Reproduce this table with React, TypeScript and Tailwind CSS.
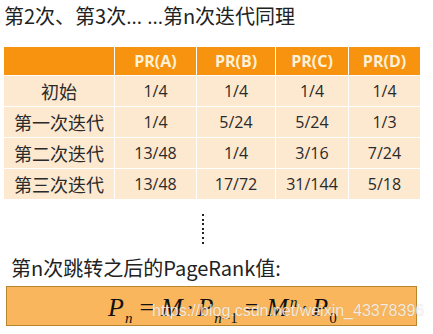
import React from 'react';

const cjk = "font-['Noto_Sans_CJK_SC',sans-serif]";
const num = "font-['Open_Sans','Noto_Sans_CJK_SC',sans-serif]";

const headers = ['PR(A)', 'PR(B)', 'PR(C)', 'PR(D)'];
const rows: string[][] = [
  ['初始', '1/4', '1/4', '1/4', '1/4'],
  ['第一次迭代', '1/4', '5/24', '5/24', '1/3'],
  ['第二次迭代', '13/48', '1/4', '3/16', '7/24'],
  ['第三次迭代', '13/48', '17/72', '31/144', '5/18'],
];

const App: React.FC = () => {
  return (
    <div className={`relative w-[433px] h-[334px] overflow-hidden bg-white text-[#222] ${cjk}`}>
      {/* title */}
      <div className="pl-[4px] pt-[3px] text-[20px] leading-[26px]">
        第2次、第3次<span className={num}>... ...</span>第n次迭代同理
      </div>

      {/* table */}
      <div className="ml-[4px] mt-[17px] w-[412px] grid grid-cols-[110px_81px_78px_72px_71px] gap-x-px gap-y-px bg-white">
        <div className="h-[28px] bg-[#f7930f]" />
        {headers.map((h) => (
          <div
            key={h}
            className={`h-[28px] bg-[#f7930f] flex items-center justify-center text-[16px] font-bold text-[#fff1d8] ${num}`}
          >
            {h}
          </div>
        ))}
        {rows.map((r) =>
          r.map((cell, i) => (
            <div
              key={r[0] + i}
              className={`h-[30px] bg-[#fde8d0] flex items-center justify-center text-[#2a2a2a] ${
                i === 0 ? 'text-[18px]' : `text-[16px] ${num}`
              }`}
            >
              {cell}
            </div>
          ))
        )}
      </div>

      {/* vertical ellipsis */}
      <div className="mt-[15px] ml-[202px] flex flex-col gap-[2.6px]">
        {[0, 1, 2, 3, 4, 5, 6].map((d) => (
          <div key={d} className="w-[2px] h-[2px] bg-[#222]" />
        ))}
      </div>

      {/* label */}
      <div className="mt-[12px] pl-[11px] text-[20px] leading-[24px]">第n次跳转之后的PageRank值:</div>

      {/* formula box */}
      <div className="mt-[6px] ml-[6px] w-[411px] h-[40px] bg-[#f9b65c] border border-[#b8862f] flex items-start pl-[101px] pt-[1px]">
        <div className="font-['Liberation_Serif',serif] italic text-[26px] leading-[28px] text-[#111] whitespace-nowrap">
          <span>P</span>
          <span className="text-[15px] align-[-7px] ml-[1px]">n</span>
          <span className="not-italic mx-[7px]">=</span>
          <span>M</span>
          <span className="not-italic mx-[3px]">·</span>
          <span>P</span>
          <span className="text-[15px] align-[-7px] ml-[1px]">n</span>
          <span className="text-[15px] align-[-7px] not-italic">−1</span>
          <span className="not-italic mx-[7px]">=</span>
          <span>M</span>
          <span className="text-[15px] align-[9px] ml-[2px]">n</span>
          <span className="not-italic mx-[3px]">·</span>
          <span>P</span>
          <span className="text-[15px] align-[-7px] not-italic ml-[1px]">0</span>
        </div>
      </div>

      {/* watermark */}
      <div className="absolute left-[152px] top-[301px] text-[16px] leading-[20px] font-['Liberation_Sans',sans-serif] text-white/80 [text-shadow:0_0_1px_rgba(0,0,0,0.2)] whitespace-nowrap">
        https://blog.csdn.net/weixin_43378396
      </div>
    </div>
  );
};

export default App;
